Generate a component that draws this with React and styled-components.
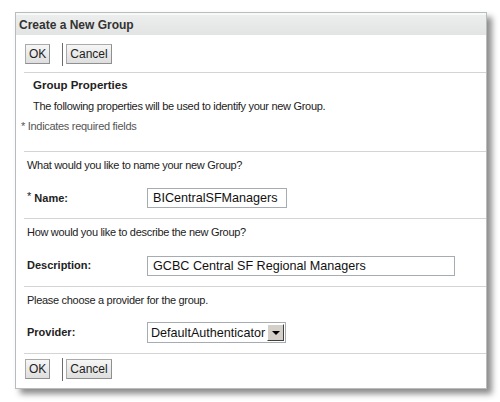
import React from 'react';
import styled, { createGlobalStyle } from 'styled-components';

const Global = createGlobalStyle`
  body {
    margin: 0;
    background: #fff;
    font-family: "Liberation Sans", Arial, sans-serif;
  }
`;

const Page = styled.div`
  padding: 12px 0 0 15px;
  width: 500px;
  height: 402px;
  box-sizing: border-box;
`;

const Panel = styled.div`
  width: 472px;
  height: 377px;
  box-sizing: border-box;
  border: 1px solid #b9bcbd;
  background: #fff;
  box-shadow: 5px 5px 6px rgba(0, 0, 0, 0.45);
  overflow: hidden;
`;

const TitleBar = styled.div`
  height: 22px;
  box-sizing: border-box;
  border-top: 2px solid #f7f8f8;
  background: linear-gradient(#eceded, #e2e3e3);
  padding-left: 3px;
  display: flex;
  align-items: center;
  font-size: 12px;
  font-weight: bold;
  color: #333;
`;

const Body = styled.div`
  padding-left: 8px;
  display: flex;
  flex-direction: column;
`;

const Divider = styled.div`
  height: 1px;
  flex: none;
  background: #d4d4d4;
`;

const Toolbar = styled.div`
  display: flex;
  align-items: flex-start;
  flex: none;
  height: ${p => p.$h}px;
  padding-top: ${p => p.$top}px;
  box-sizing: border-box;
`;

const Button = styled.button`
  height: 20px;
  padding: 0 ${p => p.$px}px;
  margin-top: 1px;
  margin-left: 1px;
  border: 1px solid #a9abab;
  border-bottom-color: #8e9090;
  border-right-color: #8e9090;
  background: linear-gradient(#f6f6f6, #dedede);
  font-family: "Liberation Sans", Arial, sans-serif;
  font-size: 12px;
  color: #222;
  line-height: 16px;
`;

const Sep = styled.div`
  width: 1px;
  height: 23px;
  background: #6b6b6b;
  margin: 0 2px 0 12px;
`;

const Section = styled.div`
  height: ${p => p.$h}px;
  flex: none;
  display: flex;
  flex-direction: column;
  font-size: 11px;
  letter-spacing: -0.3px;
  color: #222;
`;

const Heading = styled.div`
  font-weight: bold;
  font-size: 11.5px;
  letter-spacing: 0;
  margin: 6px 0 0 9px;
  height: 13px;
  line-height: 13px;
`;

const Para = styled.div`
  margin: ${p => p.$mt}px 0 0 ${p => p.$ml}px;
  height: 13px;
  line-height: 13px;
  color: ${p => p.$muted ? '#555' : 'inherit'};
`;

const Question = styled.div`
  margin: 7px 0 0 3px;
  height: 13px;
  line-height: 13px;
`;

const Row = styled.div`
  display: flex;
  align-items: center;
  margin: ${p => p.$mt}px 0 0 3px;
  letter-spacing: 0;
`;

const Label = styled.div`
  width: 120px;
  font-weight: bold;
  font-size: 11px;
  line-height: 13px;
  margin-top: ${p => p.$mt || 0}px;
  sup {
    font-weight: normal;
    font-size: 11px;
    vertical-align: top;
    position: relative;
    top: -2px;
  }
`;

const Field = styled.div`
  width: ${p => p.$w}px;
  height: 20px;
  box-sizing: border-box;
  border: 1px solid #a5acb2;
  padding-left: 5px;
  font-size: 12.6px;
  line-height: 18px;
  color: #111;
  white-space: nowrap;
  overflow: hidden;
`;

const Select = styled.div`
  width: 139px;
  height: 21px;
  box-sizing: border-box;
  border: 1px solid #a5acb2;
  padding: 1px 1px 1px 3px;
  display: flex;
  align-items: center;
  justify-content: space-between;
  font-size: 12.6px;
  color: #111;
`;

const Arrow = styled.div`
  width: 17px;
  height: 17px;
  box-sizing: border-box;
  background: #d4d0c8;
  border: 1px solid;
  border-color: #fff #404040 #404040 #fff;
  display: flex;
  align-items: center;
  justify-content: center;
  &::after {
    content: '';
    border-left: 4px solid transparent;
    border-right: 4px solid transparent;
    border-top: 4px solid #000;
  }
`;

const Buttons = ({ top, h }) => (
  <Toolbar $top={top} $h={h}>
    <Button $px={3}>OK</Button>
    <Sep />
    <Button $px={3}>Cancel</Button>
  </Toolbar>
);

export default function App() {
  return (
    <>
      <Global />
      <Page>
        <Panel>
          <TitleBar>Create a New Group</TitleBar>
          <Body>
            <Buttons top={8} h={37} />
            <Divider />
            <Section $h={78}>
              <Heading>Group Properties</Heading>
              <Para $mt={8} $ml={9}>The following properties will be used to identify your new Group.</Para>
              <Para $mt={7} $ml={-3} $muted>* Indicates required fields</Para>
            </Section>
            <Divider />
            <Section $h={66}>
              <Question>What would you like to name your new Group?</Question>
              <Row $mt={16}>
                <Label><sup>*</sup> Name:</Label>
                <Field $w={140}>BICentralSFManagers</Field>
              </Row>
            </Section>
            <Divider />
            <Section $h={67}>
              <Question>How would you like to describe the new Group?</Question>
              <Row $mt={17}>
                <Label $mt={-2}>Description:</Label>
                <Field $w={308}>GCBC Central SF Regional Managers</Field>
              </Row>
            </Section>
            <Divider />
            <Section $h={66}>
              <Question>Please choose a provider for the group.</Question>
              <Row $mt={15}>
                <Label $mt={-1}>Provider:</Label>
                <Select>
                  DefaultAuthenticator
                  <Arrow />
                </Select>
              </Row>
            </Section>
            <Divider />
            <Buttons top={4} h={33} />
          </Body>
        </Panel>
      </Page>
    </>
  );
}
